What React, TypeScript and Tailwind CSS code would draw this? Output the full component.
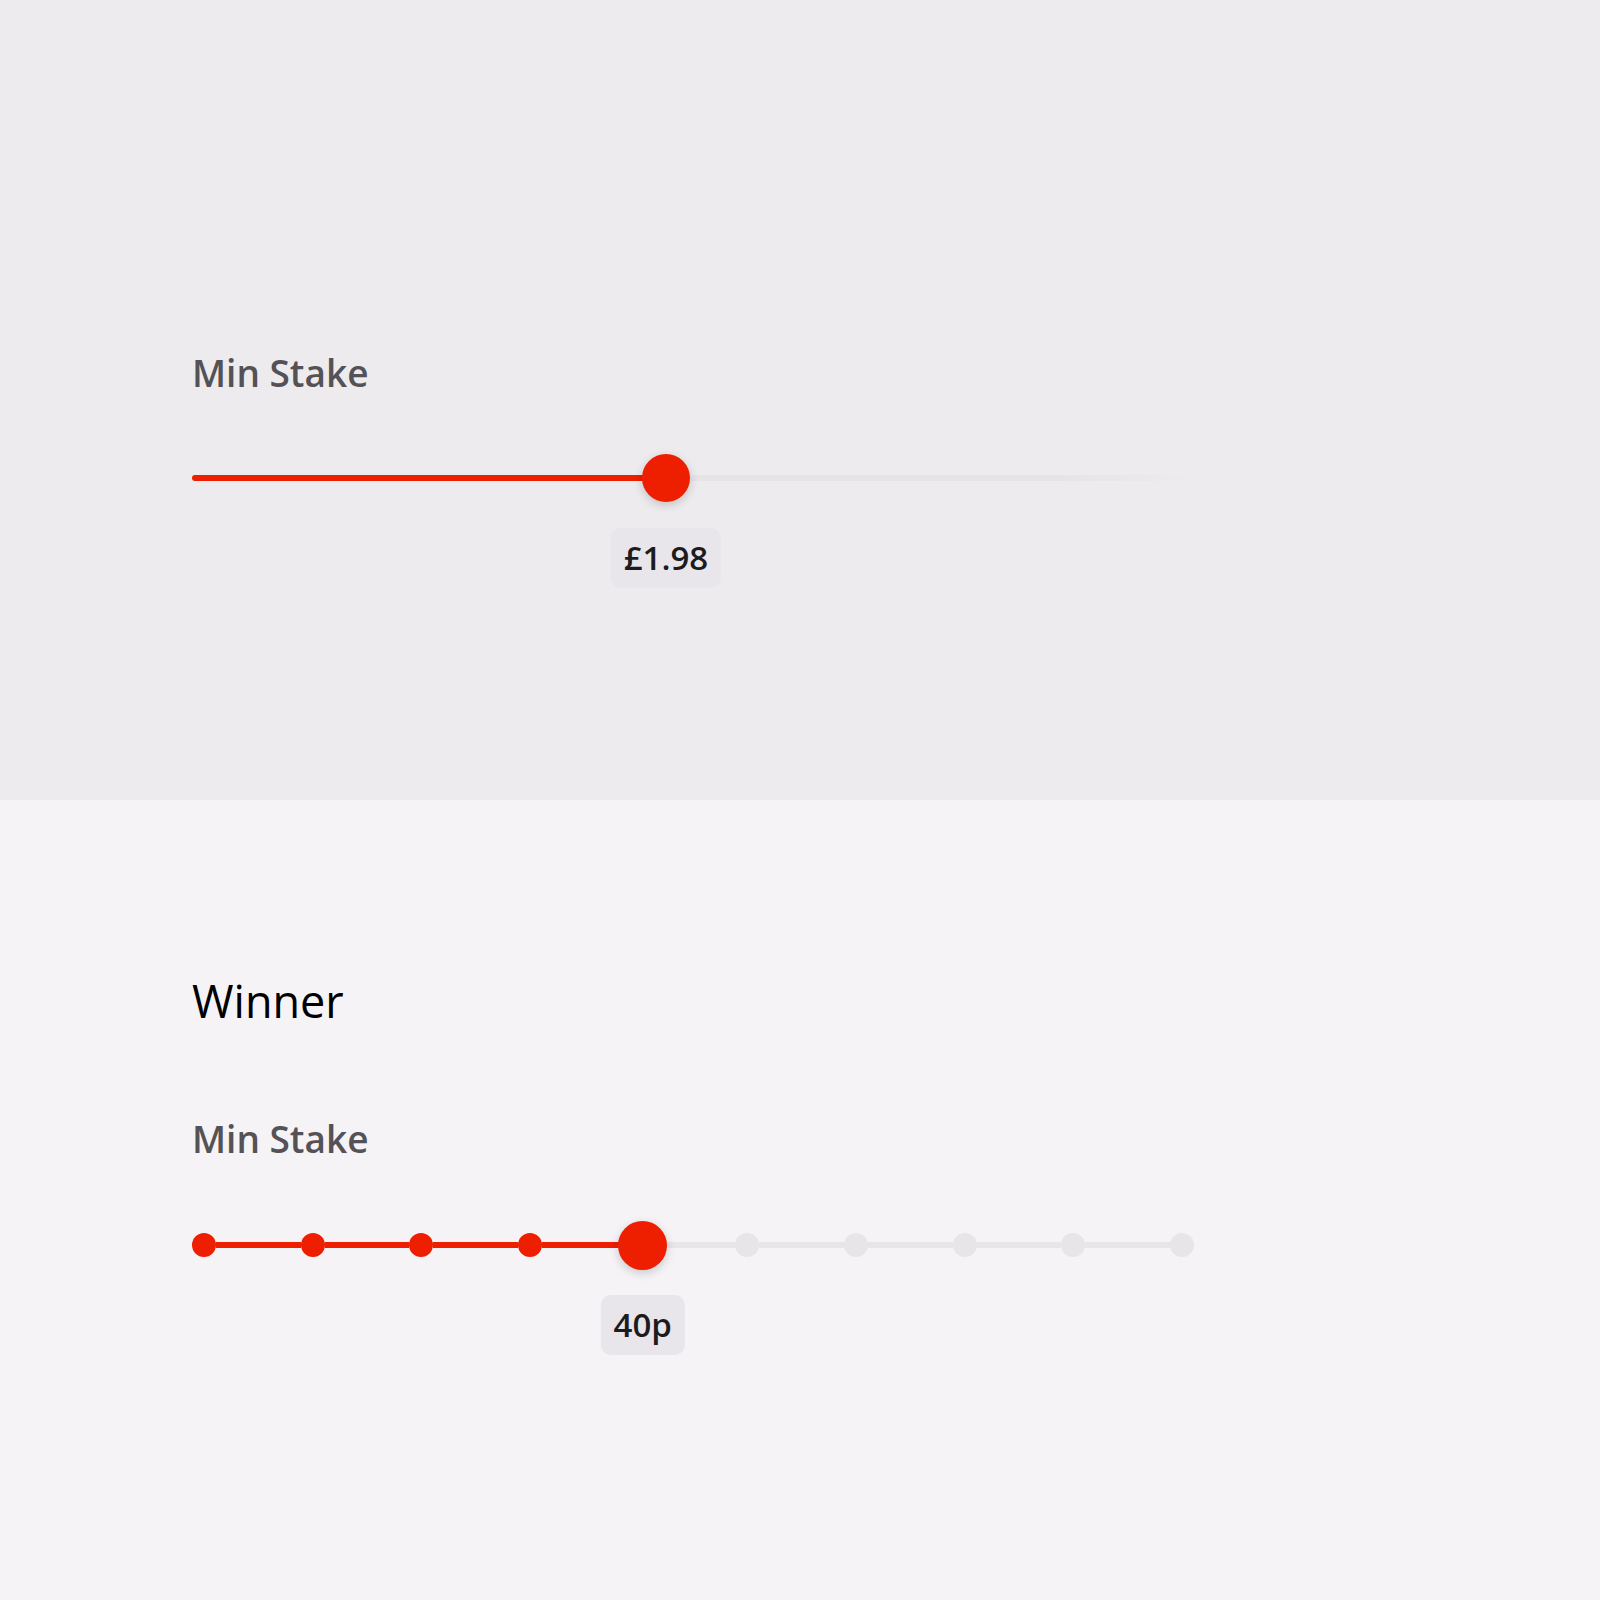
const font = { fontFamily: '"Open Sans", "Noto Sans", sans-serif' };

function ValueTag({ text }: { text: string }) {
  return (
    <div className="flex h-[60px] items-center rounded-[10px] bg-[#e8e6ea] px-[13px] text-[33px] font-semibold text-[#1c1b1e]">
      {text}
    </div>
  );
}

// thumb with its value tag hanging below it
function Thumb({ size, label, shift = '' }: { size: string; label: string; shift?: string }) {
  return (
    <div className={`relative flex w-0 justify-center ${shift}`}>
      <div className={`${size} shrink-0 rounded-full bg-[#ee1e00] shadow-[0_3px_10px_rgba(0,0,0,0.18)]`} />
      <div className="absolute left-1/2 top-[74px] -translate-x-1/2">
        <ValueTag text={label} />
      </div>
    </div>
  );
}

function ContinuousSlider({ pct, label }: { pct: number; label: string }) {
  return (
    <div className="flex h-[48px] w-[1002px] items-center">
      <div className="h-[6px] rounded-l-full bg-[#ee1e00]" style={{ width: `${pct}%` }} />
      <Thumb size="h-[48px] w-[48px]" label={label} />
      <div className="h-[6px] flex-1 rounded-r-full bg-gradient-to-r from-[#e6e4e7] via-[#e6e4e7] via-75% to-transparent" />
    </div>
  );
}

function SteppedSlider({ steps, index, label }: { steps: number; index: number; label: string }) {
  const items = [];
  for (let i = 0; i < steps; i++) {
    if (i > 0) {
      items.push(
        <div key={`s${i}`} className={`h-[6px] flex-1 ${i <= index ? 'bg-[#ee1e00]' : 'bg-[#e7e5e8]'}`} />
      );
    }
    if (i === index) {
      items.push(
        <div key={`d${i}`} className="flex h-[6px] w-[24px] items-center justify-center bg-[#ee1e00]">
          <Thumb size="h-[49px] w-[49px]" label={label} shift="translate-x-[4px]" />
        </div>
      );
    } else {
      items.push(
        <div key={`d${i}`} className={`h-[24px] w-[24px] rounded-full ${i < index ? 'bg-[#ee1e00]' : 'bg-[#e7e5e8]'}`} />
      );
    }
  }
  return <div className="flex h-[48px] w-[1002px] items-center">{items}</div>;
}

export default function App() {
  return (
    <div className="w-[1600px]" style={font}>
      <section className="flex h-[800px] flex-col bg-[#edebee] pl-[192px] pt-[349px]">
        <div className="text-[37px] font-semibold leading-[48px] text-[#545256]">Min Stake</div>
        <div className="mt-[57px]">
          <ContinuousSlider pct={47.3} label="£1.98" />
        </div>
      </section>
      <section className="flex h-[800px] flex-col bg-[#f5f3f6] pl-[192px] pt-[171px]">
        <div className="text-[45px] leading-[60px] text-black">Winner</div>
        <div className="mt-[84px] text-[37px] font-semibold leading-[48px] text-[#545256]">Min Stake</div>
        <div className="mt-[58px]">
          <SteppedSlider steps={10} index={4} label="40p" />
        </div>
      </section>
    </div>
  );
}
